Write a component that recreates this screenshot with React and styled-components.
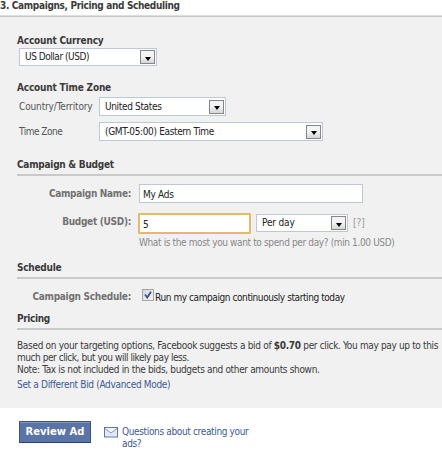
import React from "react";
import styled, { createGlobalStyle } from "styled-components";

const GlobalStyle = createGlobalStyle`
  * {
    box-sizing: border-box;
  }

  body {
    margin: 0;
    background: #fff;
    color: #3a3a3a;
    font-family: "DejaVu Sans Condensed", "DejaVu Sans", sans-serif;
    font-stretch: condensed;
    font-size: 10px;
    line-height: 12px;
    overflow: hidden;
  }
`;

const Page = styled.div`
  width: 442px;
  height: 460px;
  overflow: hidden;
`;

const Text = styled.span`
  white-space: nowrap;
  letter-spacing: ${(p) => p.$spacing || -0.3}px;
`;

const PageTitle = styled.h1`
  margin: 0;
  height: 16px;
  border-bottom: 1px solid #dedede;
  font-size: 10px;
  font-weight: bold;
  line-height: 12px;
`;

const Panel = styled.div`
  height: 392px;
  padding: 18px 0 0 17px;
  background: #f1f1f1;
  border-top: 1px solid #c6c6c6;
`;

const Heading = styled.h2`
  margin: ${(p) => p.$top || 0}px 0 0;
  font-size: 10px;
  font-weight: bold;
  line-height: 12px;
`;

const RuledHeading = styled(Heading)`
  height: 17px;
  border-bottom: 2px solid #c9c9c9;
`;

const Row = styled.div`
  display: flex;
  align-items: flex-start;
  margin-top: ${(p) => p.$top || 0}px;
`;

const ZoneLabel = styled.label`
  width: 82px;
  padding: 4px 0 0 2px;
  color: #555;
`;

const FieldLabel = styled.label`
  width: 114px;
  margin-right: ${(p) => p.$gap || 8}px;
  padding-top: ${(p) => p.$drop || 0}px;
  color: #727272;
  font-weight: bold;
  text-align: right;
`;

const Select = styled.div`
  display: flex;
  align-items: center;
  justify-content: space-between;
  width: ${(p) => p.$width}px;
  height: ${(p) => p.$height || 18}px;
  margin-left: ${(p) => p.$left || 0}px;
  padding: 0 1px 0 5px;
  border: 1px solid #bdc7d8;
  background: #fff;
  color: #222;
`;

const SelectArrow = styled.span`
  display: flex;
  align-items: center;
  justify-content: center;
  width: 15px;
  height: 14px;
  padding-top: 3px;
  border: 1px solid #868686;
  background: linear-gradient(#f4f4f4 45%, #d6d6d6);

  &::before {
    content: "";
    border: 3px solid transparent;
    border-top: 4px solid #000;
    border-bottom: 0;
  }
`;

const Input = styled.input`
  width: ${(p) => p.$width}px;
  height: ${(p) => p.$height}px;
  padding: 1px 3px 0;
  border: ${(p) => (p.$active ? "2px solid #e3bb6c" : "1px solid #bdc7d8")};
  border-radius: ${(p) => (p.$active ? 1 : 0)}px;
  outline: none;
  background: #fff;
  color: #222;
  font: inherit;
  letter-spacing: -0.3px;
`;

const Help = styled.span`
  margin: 3px 0 0 5px;
  color: #999;
`;

const Hint = styled.div`
  margin: 3px 0 0 122px;
  color: #888;
`;

const Checkbox = styled.span`
  display: flex;
  align-items: center;
  justify-content: center;
  width: 12px;
  height: 12px;
  margin: 0 1px 0 3px;
  border: 1px solid #a2a6ab;
  background: linear-gradient(135deg, #d2d6dc, #f6f6f6);
`;

const CheckLabel = styled.label`
  padding-top: 3px;
  color: #222;
`;

const Paragraph = styled.p`
  display: flex;
  flex-direction: column;
  margin: 10px 0 0;
`;

const Link = styled.a`
  display: block;
  margin-top: ${(p) => p.$top || 0}px;
  color: #3b5998;
  text-decoration: none;
`;

const Footer = styled.div`
  display: flex;
  align-items: flex-start;
  padding: 13px 0 0 19px;
`;

const ReviewButton = styled.button`
  width: 72px;
  height: 22px;
  padding: 0;
  border: 1px solid #3a5488;
  border-bottom-color: #29447e;
  background: #5b74a8;
  box-shadow: inset 0 1px 0 #8095be;
  color: #fff;
  font: bold 10px/18px "DejaVu Sans", sans-serif;
`;

const EnvelopeIcon = styled.svg`
  margin: 6px 3px 0 13px;
`;

const Envelope = () => (
  <EnvelopeIcon width="15" height="11" viewBox="0 0 15 11">
    <rect x="0.5" y="0.5" width="13" height="9.5" fill="#e4e9f3" stroke="#6079ad" />
    <path d="M1 1.5 L7 6 L13 1.5" fill="#fff" stroke="#7e92bd" />
  </EnvelopeIcon>
);

const Dropdown = ({ text, spacing, ...rest }) => (
  <Select {...rest}>
    <Text $spacing={spacing}>{text}</Text>
    <SelectArrow />
  </Select>
);

const App = () => {
  return (
    <Page>
      <GlobalStyle />
      <PageTitle>
        <Text $spacing={-0.34}>3. Campaigns, Pricing and Scheduling</Text>
      </PageTitle>
      <Panel>
        <Heading>
          <Text $spacing={-0.2}>Account Currency</Text>
        </Heading>
        <Row $top={1}>
          <Dropdown $width={138} $left={2} text="US Dollar (USD)" spacing={-0.46} />
        </Row>

        <Heading $top={16}>
          <Text $spacing={-0.18}>Account Time Zone</Text>
        </Heading>
        <Row $top={3}>
          <ZoneLabel>
            <Text $spacing={-0.14}>Country/Territory</Text>
          </ZoneLabel>
          <Dropdown $width={127} $height={19} text="United States" spacing={-0.34} />
        </Row>
        <Row $top={6}>
          <ZoneLabel>
            <Text $spacing={-0.5}>Time Zone</Text>
          </ZoneLabel>
          <Dropdown $width={224} $height={19} text="(GMT-05:00) Eastern Time" spacing={-0.35} />
        </Row>

        <RuledHeading $top={18}>
          <Text $spacing={-0.25}>Campaign &amp; Budget</Text>
        </RuledHeading>
        <Row $top={8}>
          <FieldLabel $drop={4}>
            <Text>Campaign Name:</Text>
          </FieldLabel>
          <Input $width={224} $height={19} defaultValue="My Ads" />
        </Row>
        <Row $top={10}>
          <FieldLabel $gap={7} $drop={3}>
            <Text>Budget (USD):</Text>
          </FieldLabel>
          <Input $width={113} $height={21} $active defaultValue="5" />
          <Row $top={1}>
            <Dropdown $width={92} $left={5} text="Per day" spacing={-0.15} />
            <Help>[?]</Help>
          </Row>
        </Row>
        <Hint>
          <Text $spacing={-0.37}>What is the most you want to spend per day? (min 1.00 USD)</Text>
        </Hint>

        <RuledHeading $top={13}>
          <Text $spacing={-0.25}>Schedule</Text>
        </RuledHeading>
        <Row $top={10}>
          <FieldLabel $drop={2}>
            <Text $spacing={-0.28}>Campaign Schedule:</Text>
          </FieldLabel>
          <Checkbox>
            <svg width="8" height="8" viewBox="0 0 8 8">
              <path d="M1 3.5 L3.2 6.5 L7 0.8" fill="none" stroke="#3c4f92" strokeWidth="1.8" />
            </svg>
          </Checkbox>
          <CheckLabel>
            <Text $spacing={-0.42}>Run my campaign continuously starting today</Text>
          </CheckLabel>
        </Row>

        <RuledHeading $top={9}>
          <Text $spacing={-0.35}>Pricing</Text>
        </RuledHeading>
        <Paragraph>
          <span>
            <Text $spacing={-0.31}>Based on your targeting options, Facebook suggests a bid of </Text>
            <Text as="b">$0.70</Text>
            <Text $spacing={-0.35}> per click. You may pay up to this</Text>
          </span>
          <Text $spacing={-0.45}>much per click, but you will likely pay less.</Text>
          <Text $spacing={-0.34}>Note: Tax is not included in the bids, budgets and other amounts shown.</Text>
        </Paragraph>
        <Link $top={3}>
          <Text $spacing={-0.32}>Set a Different Bid (Advanced Mode)</Text>
        </Link>
      </Panel>

      <Footer>
        <ReviewButton>Review Ad</ReviewButton>
        <Envelope />
        <Link $top={5}>
          <Text $spacing={-0.35}>
            Questions about creating your
            <br />
            ads?
          </Text>
        </Link>
      </Footer>
    </Page>
  );
};

export default App;
